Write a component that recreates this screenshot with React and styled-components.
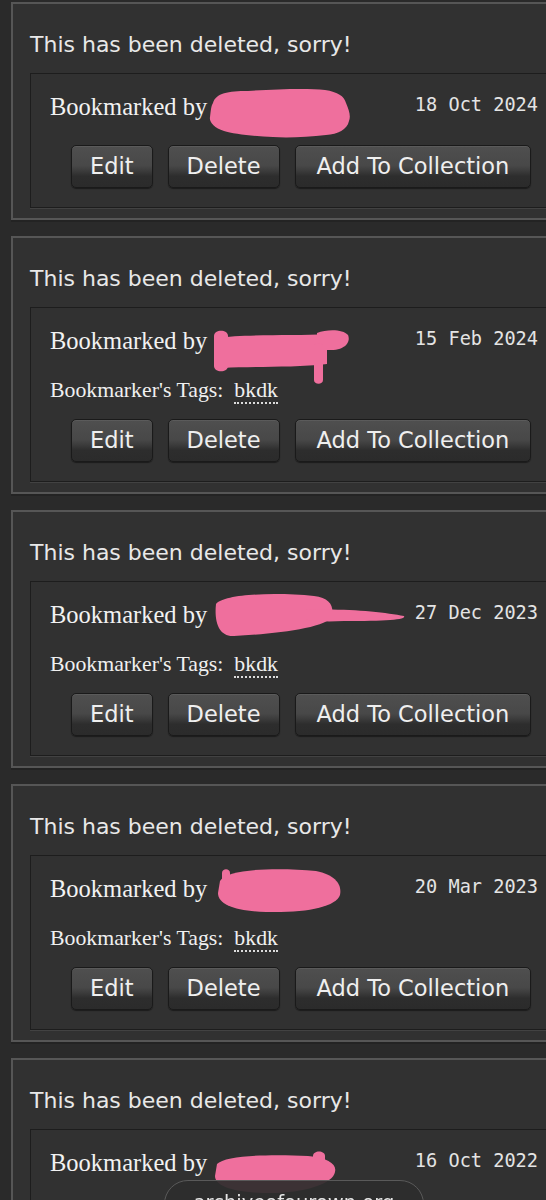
import React from "react";
import styled, { createGlobalStyle } from "styled-components";

const GlobalStyle = createGlobalStyle`
  html, body { margin: 0; padding: 0; background: #2a2a2a; overflow: hidden; }
  body { width: 546px; height: 1200px; }
`;

const List = styled.main`
  display: flex;
  flex-direction: column;
  gap: 16px;
  padding: 2px 0 0 11px;
`;

const Card = styled.article`
  width: 568px;
  flex-shrink: 0;
  box-sizing: border-box;
  background: #313131;
  border: 2px solid #565656;
  box-shadow: 0 2px 0 #232323;
  padding: 28px 17px 10px 17px;
`;

const Title = styled.h4`
  margin: 0 0 15px;
  font-family: "DejaVu Sans", Verdana, sans-serif;
  font-weight: normal;
  font-size: 22px;
  line-height: 26px;
  color: #e8e8e8;
`;

const Entry = styled.div`
  position: relative;
  background: #313131;
  border: 1px solid #1d1d1d;
  box-shadow: 0 1px 0 #424242;
  padding: 19px 21px 19px 19px;
`;

const Head = styled.div`
  display: flex;
  justify-content: space-between;
  align-items: flex-start;
`;

const Byline = styled.h5`
  margin: 0;
  font-family: "Liberation Serif", Georgia, serif;
  font-weight: normal;
  font-size: 24.5px;
  line-height: 28px;
  color: #f2f2f2;
`;

const DateText = styled.p`
  margin: 1px 0 0;
  font-family: "DejaVu Sans Mono", monospace;
  font-size: 18.6px;
  line-height: 22px;
  color: #e4e4e4;
`;

const Tags = styled.p`
  margin: 23px 0 0;
  font-family: "Liberation Serif", Georgia, serif;
  font-size: 21.8px;
  line-height: 24px;
  color: #f0f0f0;
`;

const Tag = styled.span`
  margin-left: 11px;
  border-bottom: 2px dotted #dcdcdc;
`;

const Actions = styled.ul`
  display: flex;
  gap: 15px;
  list-style: none;
  margin: ${(p) => (p.$afterTags ? 17 : 24)}px 0 0;
  padding: 0 0 0 21px;
`;

const Button = styled.li`
  box-sizing: border-box;
  height: 43px;
  padding: 0 ${(p) => (p.$wide ? 21 : 18)}px;
  font-family: "DejaVu Sans", Verdana, sans-serif;
  font-size: 22.5px;
  line-height: 41px;
  color: #efefef;
  border: 1px solid #1a1a1a;
  border-radius: 5px;
  background: linear-gradient(
    to bottom,
    #4f4f4f 0%,
    #484848 48%,
    #3c3c3c 60%,
    #2d2d2d 74%,
    #2b2b2b 100%
  );
  box-shadow: inset 0 1px 0 rgba(255, 255, 255, 0.07), 0 1px 1px rgba(0, 0, 0, 0.45);
  white-space: nowrap;
`;

const Blob = styled.svg`
  position: absolute;
  left: ${(p) => p.$x}px;
  top: ${(p) => p.$y}px;
  overflow: visible;
  fill: #ef6f9d;
`;

const Pill = styled.div`
  position: fixed;
  left: 164px;
  top: 1180px;
  width: 260px;
  height: 60px;
  box-sizing: border-box;
  padding-top: 10px;
  border: 1px solid #5a5a5a;
  border-radius: 24px;
  background: rgba(44, 44, 44, 0.92);
  text-align: center;
  font-family: "DejaVu Sans", Verdana, sans-serif;
  font-size: 19.5px;
  line-height: 24px;
  color: #e6e6e6;
`;

const blobs = [
  {
    x: 177, y: 14, w: 143, h: 52,
    paths: [
      "M5 15 C8 5 20 3 40 3 C70 1 100 0 117 2 C130 4 136 8 138 15 C141 22 143 28 141 33 C139 42 130 46 118 47 C100 49 80 50 65 49 C45 48 25 46 16 43 C6 40 1 34 2 29 C3 22 3 18 5 15 Z",
    ],
  },
  {
    x: 182, y: 22, w: 136, h: 54,
    paths: [
      "M4 8 C30 4 80 6 114 4 L114 34 C80 38 40 36 10 38 Z",
      "M1 6 C1 -1 15 -1 15 6 L15 36 C15 43 1 43 1 36 Z",
      "M104 3 C114 -1 130 -1 135 5 C138 12 132 20 118 20 L104 20 Z",
      "M101 16 C101 12 110 12 110 16 L110 50 C110 55 101 55 101 50 Z",
    ],
  },
  {
    x: 183, y: 10, w: 192, h: 48,
    paths: [
      "M2 12 C10 2 60 0 100 4 C116 6 120 14 118 24 C114 36 60 42 20 44 C5 45 0 30 2 12 Z",
      "M90 18 C130 16 170 20 190 24 C193 28 170 29 130 29 C110 30 95 29 90 27 Z",
    ],
  },
  {
    x: 185, y: 11, w: 126, h: 46,
    paths: [
      "M4 14 C10 2 60 0 100 4 C120 8 126 18 124 28 C120 40 90 46 50 45 C20 44 2 38 2 26 Z",
      "M6 6 C6 1 14 1 14 6 L14 16 L6 16 Z",
    ],
  },
  {
    x: 182, y: 22, w: 124, h: 42,
    paths: [
      "M4 12 C12 3 60 2 95 4 C115 6 124 12 122 20 C120 32 90 42 50 41 C20 40 2 34 2 24 Z",
      "M100 4 C100 -2 112 -2 112 4 L112 10 L100 10 Z",
    ],
  },
];

const entries = [
  { date: "18 Oct 2024", tags: null },
  { date: "15 Feb 2024", tags: "bkdk" },
  { date: "27 Dec 2023", tags: "bkdk" },
  { date: "20 Mar 2023", tags: "bkdk" },
  { date: "16 Oct 2022", tags: "bkdk" },
];

function Redaction({ b }) {
  return (
    <Blob $x={b.x} $y={b.y} width={b.w} height={b.h} viewBox={`0 0 ${b.w} ${b.h}`}>
      {b.paths.map((d, i) => (
        <path key={i} d={d} />
      ))}
    </Blob>
  );
}

export default function App() {
  return (
    <>
      <GlobalStyle />
      <List>
        {entries.map((e, i) => (
          <Card key={i}>
            <Title>This has been deleted, sorry!</Title>
            <Entry>
              <Head>
                <Byline>Bookmarked by</Byline>
                <DateText>{e.date}</DateText>
              </Head>
              {e.tags && (
                <Tags>
                  Bookmarker's Tags:<Tag>{e.tags}</Tag>
                </Tags>
              )}
              <Actions $afterTags={!!e.tags}>
                <Button>Edit</Button>
                <Button>Delete</Button>
                <Button $wide>Add To Collection</Button>
              </Actions>
              <Redaction b={blobs[i]} />
            </Entry>
          </Card>
        ))}
      </List>
      <Pill>archiveofourown.org</Pill>
    </>
  );
}
